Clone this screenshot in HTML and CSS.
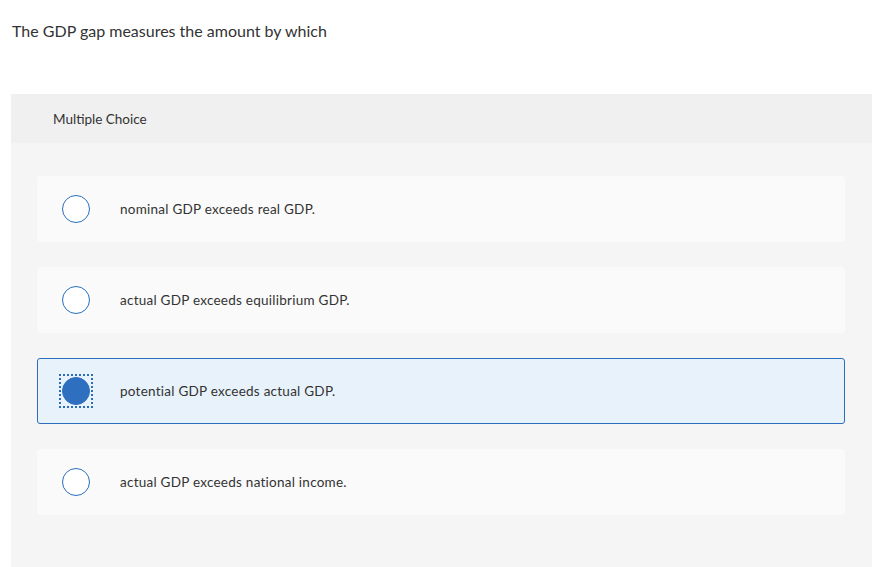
FILE: index.html
```html
<!DOCTYPE html>
<html>
<head>
<meta charset="utf-8">
<link rel="stylesheet" href="styles.css">
</head>
<body>
<div class="page">
  <p class="question">The GDP gap measures the amount by which</p>
  <section class="panel">
    <div class="panel-head">Multiple Choice</div>
    <div class="panel-body">
      <div class="option">
        <span class="radio"></span>
        <span class="label">nominal GDP exceeds real GDP.</span>
      </div>
      <div class="option">
        <span class="radio"></span>
        <span class="label">actual GDP exceeds equilibrium GDP.</span>
      </div>
      <div class="option selected">
        <span class="radio-focus"><span class="radio checked"></span></span>
        <span class="label">potential GDP exceeds actual GDP.</span>
      </div>
      <div class="option">
        <span class="radio"></span>
        <span class="label">actual GDP exceeds national income.</span>
      </div>
    </div>
  </section>
</div>
</body>
</html>
```

FILE: styles.css
```css
* { box-sizing: border-box; }
html, body { margin: 0; padding: 0; background: #fff; }
body {
  font-family: Lato, "Open Sans", "Liberation Sans", sans-serif;
  color: #333;
}
.page {
  padding: 0 2px 0 11px;
}
.question {
  margin: 0;
  padding: 21px 0 0 1px;
  height: 94px;
  font-size: 16px;
  line-height: 20px;
  color: #333;
}
.panel {
  background: #f5f5f5;
  border-radius: 2px;
  height: 480px;
}
.panel-head {
  background: #f0f0f0;
  height: 49px;
  padding: 17px 0 0 42px;
  font-size: 13.5px;
  line-height: 17px;
  color: #333;
}
.panel-body {
  padding: 33px 27px 0 26px;
  display: flex;
  flex-direction: column;
  gap: 25px;
}
.option {
  height: 66px;
  background: #fafafa;
  border: 1px solid #fafafa;
  border-radius: 3px;
  display: flex;
  align-items: center;
  padding-left: 24px;
}
.option.selected {
  background: #e8f2fb;
  border-color: #2a6ebb;
}
.radio {
  width: 28px;
  height: 28px;
  border: 1.3px solid #2a6ebb;
  border-radius: 50%;
  background: #fff;
  flex: none;
}
.radio.checked {
  background: #2e6fbf;
  border-color: #2e6fbf;
}
.radio-focus {
  display: flex;
  align-items: center;
  justify-content: center;
  width: 34px;
  height: 34px;
  margin-left: -3px;
  margin-right: -3px;
  border: 2px dotted #2a6ebb;
  flex: none;
}
.label {
  margin-left: 30px;
  font-size: 13.5px;
  letter-spacing: 0.25px;
  line-height: 16px;
  color: #333;
}
```
